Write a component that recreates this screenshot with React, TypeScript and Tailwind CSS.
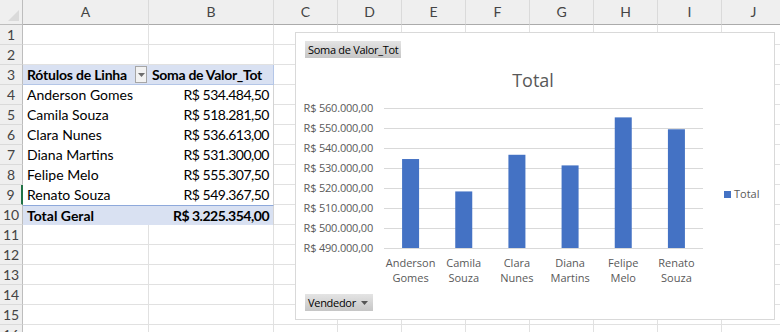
import React from "react";

const cols = ["A", "B", "C", "D", "E", "F", "G", "H", "I", "J"];

const vendas = [
  { nome: "Anderson Gomes", valor: 534484.5, l1: "Anderson", l2: "Gomes" },
  { nome: "Camila Souza", valor: 518281.5, l1: "Camila", l2: "Souza" },
  { nome: "Clara Nunes", valor: 536613.0, l1: "Clara", l2: "Nunes" },
  { nome: "Diana Martins", valor: 531300.0, l1: "Diana", l2: "Martins" },
  { nome: "Felipe Melo", valor: 555307.5, l1: "Felipe", l2: "Melo" },
  { nome: "Renato Souza", valor: 549367.5, l1: "Renato", l2: "Souza" },
];

const brl = (v: number) =>
  "R$ " +
  v.toLocaleString("pt-BR", { minimumFractionDigits: 2, maximumFractionDigits: 2 });

function Cell({ row, col }: { row: number; col: number }) {
  // pivot table occupies A3:B10
  const inPivot = row >= 3 && row <= 10 && col <= 1;
  if (!inPivot) {
    return <div className="border-r border-b border-[#e1e1e1] bg-white" />;
  }
  if (row === 3) {
    return col === 0 ? (
      <div className="flex items-center justify-between whitespace-nowrap bg-[#d9e1f2] border-b border-[#b4c6e7] pl-[4px] pr-[2px] font-bold text-black">
        <span className="tracking-[-0.2px]">Rótulos de Linha</span>
        <span className="flex h-[17px] w-[12px] items-center justify-center border border-[#a6a6a6] bg-[#f2f2f2]">
          <svg width="7" height="4" viewBox="0 0 7 4">
            <path d="M0 0h7L3.5 4z" fill="#6d6d6d" />
          </svg>
        </span>
      </div>
    ) : (
      <div className="flex items-center whitespace-nowrap bg-[#d9e1f2] border-b border-r border-[#b4c6e7] pl-[3px] font-bold tracking-[-0.3px] text-black">
        Soma de Valor_Tot
      </div>
    );
  }
  if (row === 10) {
    return col === 0 ? (
      <div className="flex items-center bg-[#d9e1f2] border-t border-[#8ea9db] pl-[4px] font-bold text-black">
        Total Geral
      </div>
    ) : (
      <div className="flex items-center justify-end whitespace-nowrap bg-[#d9e1f2] border-t border-r border-t-[#8ea9db] border-r-[#d4d4d4] pr-[4px] font-bold tracking-[-0.5px] text-black">
        {brl(vendas.reduce((s, v) => s + v.valor, 0))}
      </div>
    );
  }
  const v = vendas[row - 4];
  return col === 0 ? (
    <div className="flex items-center whitespace-nowrap bg-white pl-[4px] text-black">{v.nome}</div>
  ) : (
    <div className="flex items-center justify-end whitespace-nowrap bg-white border-r border-[#d4d4d4] pr-[4px] tracking-[-0.5px] text-black">
      {brl(v.valor)}
    </div>
  );
}

function Chart() {
  const top = 108;
  const step = 20;
  const ticks = [560, 550, 540, 530, 520, 510, 500, 490];
  const x0 = 384;
  const x1 = 703;
  const cw = (x1 - x0) / vendas.length;
  const yOf = (v: number) => 248 - ((v - 490000) / 70000) * 140;
  return (
    <div className="absolute left-[295px] top-[32px] h-[288px] w-[480px] border border-[#d9d9d9] bg-white">
      <svg
        className="absolute left-[-1px] top-[-1px]"
        width="480"
        height="288"
        viewBox="295 32 480 288"
        style={{ fontFamily: "'Open Sans', 'Noto Sans', sans-serif" }}
      >
        <text x="533" y="87" textAnchor="middle" fontSize="18" fill="#595959">
          Total
        </text>
        {ticks.map((t, i) => (
          <g key={t}>
            <line x1={x0} x2={x1} y1={top + i * step + 0.5} y2={top + i * step + 0.5} stroke="#d9d9d9" />
            <text x="373" y={top + i * step + 4} textAnchor="end" fontSize="11" letterSpacing="-0.2" fill="#595959">
              {"R$ " + t + ".000,00"}
            </text>
          </g>
        ))}
        {vendas.map((v, i) => {
          const cx = x0 + cw * (i + 0.5);
          const y = yOf(v.valor);
          return (
            <g key={v.nome}>
              <rect x={cx - 8.5} y={y} width="17" height={248 - y} fill="#4472c4" />
              <text x={cx} y="267" textAnchor="middle" fontSize="11" fill="#595959">
                {v.l1}
              </text>
              <text x={cx} y="282" textAnchor="middle" fontSize="11" fill="#595959">
                {v.l2}
              </text>
            </g>
          );
        })}
        <rect x="724" y="191" width="7" height="7" fill="#4472c4" />
        <text x="734" y="198" fontSize="11" fill="#595959">
          Total
        </text>
      </svg>
      <div
        className="relative flex h-full flex-col items-start justify-between px-[9px] pt-[8px] pb-[8px] text-[11px] text-black"
        style={{ fontFamily: "'Open Sans', 'Noto Sans', sans-serif" }}
      >
        <div className="flex h-[17px] items-center whitespace-nowrap bg-gradient-to-b from-[#e4e4e4] to-[#c6c6c6] px-[3px] leading-none tracking-[-0.3px]">
          Soma de Valor_Tot
        </div>
        <div className="flex h-[17px] items-center gap-[5px] whitespace-nowrap bg-gradient-to-b from-[#e4e4e4] to-[#c6c6c6] pl-[3px] pr-[5px] leading-none tracking-[-0.3px]">
          <span>Vendedor</span>
          <svg width="7" height="4" viewBox="0 0 7 4">
            <path d="M0 0h7L3.5 4z" fill="#555" />
          </svg>
        </div>
      </div>
    </div>
  );
}

export default function App() {
  const rows = Array.from({ length: 16 }, (_, i) => i + 1);
  return (
    <div
      className="relative h-[332px] w-[780px] overflow-hidden bg-white text-[14px] leading-none"
      style={{ fontFamily: "Lato, 'Liberation Sans', sans-serif" }}
    >
      <div className="grid grid-cols-[23px_126px_125px_repeat(8,64px)] grid-rows-[25px_repeat(16,20px)]">
        {/* corner */}
        <div className="relative border-r border-b border-[#bdbdbd] bg-[#efefef]">
          <svg className="absolute right-[3px] bottom-[3px]" width="11" height="11" viewBox="0 0 11 11">
            <path d="M11 0V11H0z" fill="#dadada" />
          </svg>
        </div>
        {cols.map((c) => (
          <div
            key={c}
            className="flex items-center justify-center border-r border-b border-r-[#dadada] border-b-[#ababab] bg-[#efefef] text-[14px] text-[#444]"
          >
            {c}
          </div>
        ))}
        {rows.map((r) => (
          <React.Fragment key={r}>
            <div
              className={
                r === 9
                  ? "flex items-center justify-center border-r-2 border-b border-r-[#217346] border-b-[#dadada] bg-[#efefef] text-[14px] text-[#444]"
                  : "flex items-center justify-center border-r border-b border-r-[#bdbdbd] border-b-[#dadada] bg-[#efefef] text-[14px] text-[#444]"
              }
            >
              {r}
            </div>
            {cols.map((c, ci) => (
              <Cell key={c} row={r} col={ci} />
            ))}
          </React.Fragment>
        ))}
      </div>
      <Chart />
    </div>
  );
}
